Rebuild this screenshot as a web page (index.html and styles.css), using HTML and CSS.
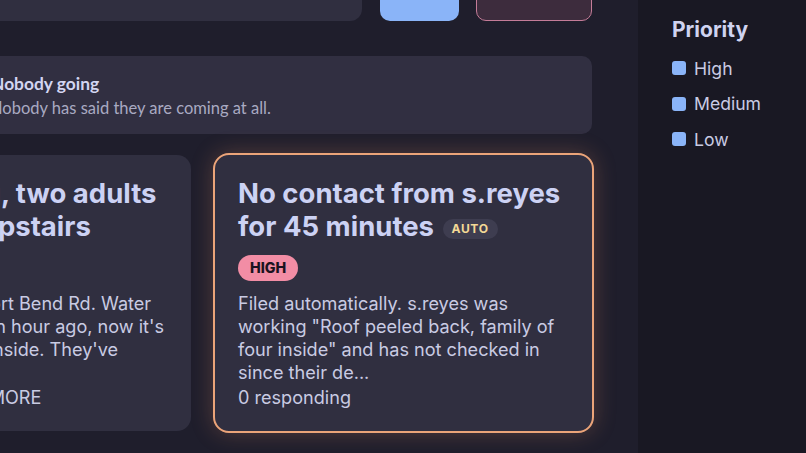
FILE: index.html
```html
<!DOCTYPE html>
<html lang="en">
<head>
<meta charset="utf-8">
<title>Incidents</title>
<link rel="stylesheet" href="styles.css">
</head>
<body>
<div class="app">
  <main class="main">
    <div class="content">
      <div class="toolbar">
        <div class="search"></div>
        <div class="btn btn-primary"></div>
        <div class="btn btn-danger"></div>
      </div>
      <section class="banner">
        <div class="banner-title">Nobody going</div>
        <div class="banner-text">Nobody has said they are coming at all.</div>
      </section>
      <div class="cards">
        <article class="card">
          <h2 class="card-title">Water rising, two adults sheltering upstairs</h2>
          <div class="badges"><span class="pill pill-high">HIGH</span></div>
          <p class="card-body">Callers at 44107 Fort Bend Rd. Water began coming in an hour ago, now it's two feet of water inside. They've</p>
          <div class="card-foot">2 en route, NEED MORE</div>
        </article>
        <article class="card card-selected">
          <h2 class="card-title">No contact from s.reyes for 45&nbsp;minutes <span class="tag-auto">AUTO</span></h2>
          <div class="badges"><span class="pill pill-high">HIGH</span></div>
          <p class="card-body">Filed automatically. s.reyes was working "Roof peeled back, family of four inside" and has not checked in since their de...</p>
          <div class="card-foot">0 responding</div>
        </article>
      </div>
    </div>
  </main>
  <aside class="sidebar">
    <h3 class="side-title">Priority</h3>
    <ul class="filters">
      <li class="filter"><span class="check"></span>High</li>
      <li class="filter"><span class="check"></span>Medium</li>
      <li class="filter"><span class="check"></span>Low</li>
    </ul>
  </aside>
</div>
</body>
</html>
```

FILE: styles.css
```css
* { box-sizing: border-box; }
html, body { margin: 0; padding: 0; }
body {
  background: #1f1e2c;
  font-family: Inter, "Noto Sans", sans-serif;
  color: #cdd2f2;
  width: 806px;
  height: 453px;
  overflow: hidden;
}
.app {
  display: grid;
  grid-template-columns: 638px 168px;
  height: 453px;
  overflow: hidden;
}
.main {
  overflow: hidden;
  background: #1f1e2c;
}
.content {
  width: 778px;
  margin-left: -186px;
  margin-top: -30px;
  display: flex;
  flex-direction: column;
}
.toolbar {
  display: flex;
  height: 51px;
  align-items: stretch;
}
.search {
  width: 548px;
  background: #302f40;
  border-radius: 12px;
}
.btn { border-radius: 10px; }
.btn-primary {
  width: 79px;
  margin-left: 18px;
  background: #8ab4f8;
}
.btn-danger {
  width: 116px;
  margin-left: 17px;
  background: #3d2c3d;
  border: 1.5px solid #c47c98;
}
.banner {
  margin-top: 35px;
  height: 78px;
  background: #312f41;
  border-radius: 10px;
  padding: 17px 0 0 177px;
  font-family: Lato, "Noto Sans", sans-serif;
}
.banner-title {
  font-weight: 700;
  font-size: 17.4px;
  line-height: 22px;
  color: #d3d6f2;
}
.banner-text {
  margin-top: 2px;
  margin-left: -1px;
  font-size: 16.5px;
  line-height: 22px;
  color: #a9aac2;
}
.cards {
  margin-top: 21px;
  display: grid;
  grid-template-columns: 377px 377px;
  column-gap: 24px;
  height: 276px;
}
.card {
  background: #302f40;
  border-radius: 14px;
  padding: 22px 18px 22px 24px;
  display: flex;
  flex-direction: column;
}
.card-selected {
  margin: -2px;
  border: 2px solid #eba479;
  border-radius: 16px;
  padding: 22px 18px 22px 23px;
  box-shadow: 0 0 22px rgba(226, 140, 96, 0.28);
}
.card-title {
  margin: 0;
  font-size: 27.5px;
  line-height: 33px;
  font-weight: 700;
  color: #ccd2f4;
}
.tag-auto {
  display: inline-block;
  vertical-align: 3px;
  margin-left: 2px;
  height: 20px;
  padding: 0 9px;
  border-radius: 10px;
  background: #3e3d50;
  color: #f3d996;
  font-size: 12.1px;
  line-height: 20px;
  font-weight: 700;
  letter-spacing: 0.6px;
}
.badges {
  margin-top: 12px;
  display: flex;
}
.pill {
  height: 26px;
  padding: 0 12px;
  border-radius: 13px;
  font-size: 14.3px;
  line-height: 26px;
  font-weight: 800;
}
.pill-high {
  background: #f28da5;
  color: #1b1320;
}
.card-body {
  margin: 11px 0 0;
  font-size: 18.1px;
  line-height: 23px;
  color: #c9cbe3;
}
.card-foot {
  margin-top: auto;
  font-size: 18.1px;
  line-height: 23px;
  color: #c9cbe3;
}
.sidebar {
  background: #191823;
  padding: 17px 0 0 34px;
}
.side-title {
  margin: 0;
  font-size: 21px;
  line-height: 26px;
  font-weight: 700;
  color: #cfd3f0;
}
.filters {
  list-style: none;
  margin: 13px 0 0;
  padding: 0;
}
.filter {
  display: flex;
  align-items: center;
  height: 24px;
  margin-bottom: 11.5px;
  font-size: 17.6px;
  color: #c9cbe3;
}
.check {
  width: 14px;
  height: 14px;
  border-radius: 3px;
  background: #8ab4f8;
  margin-right: 8px;
}
```
